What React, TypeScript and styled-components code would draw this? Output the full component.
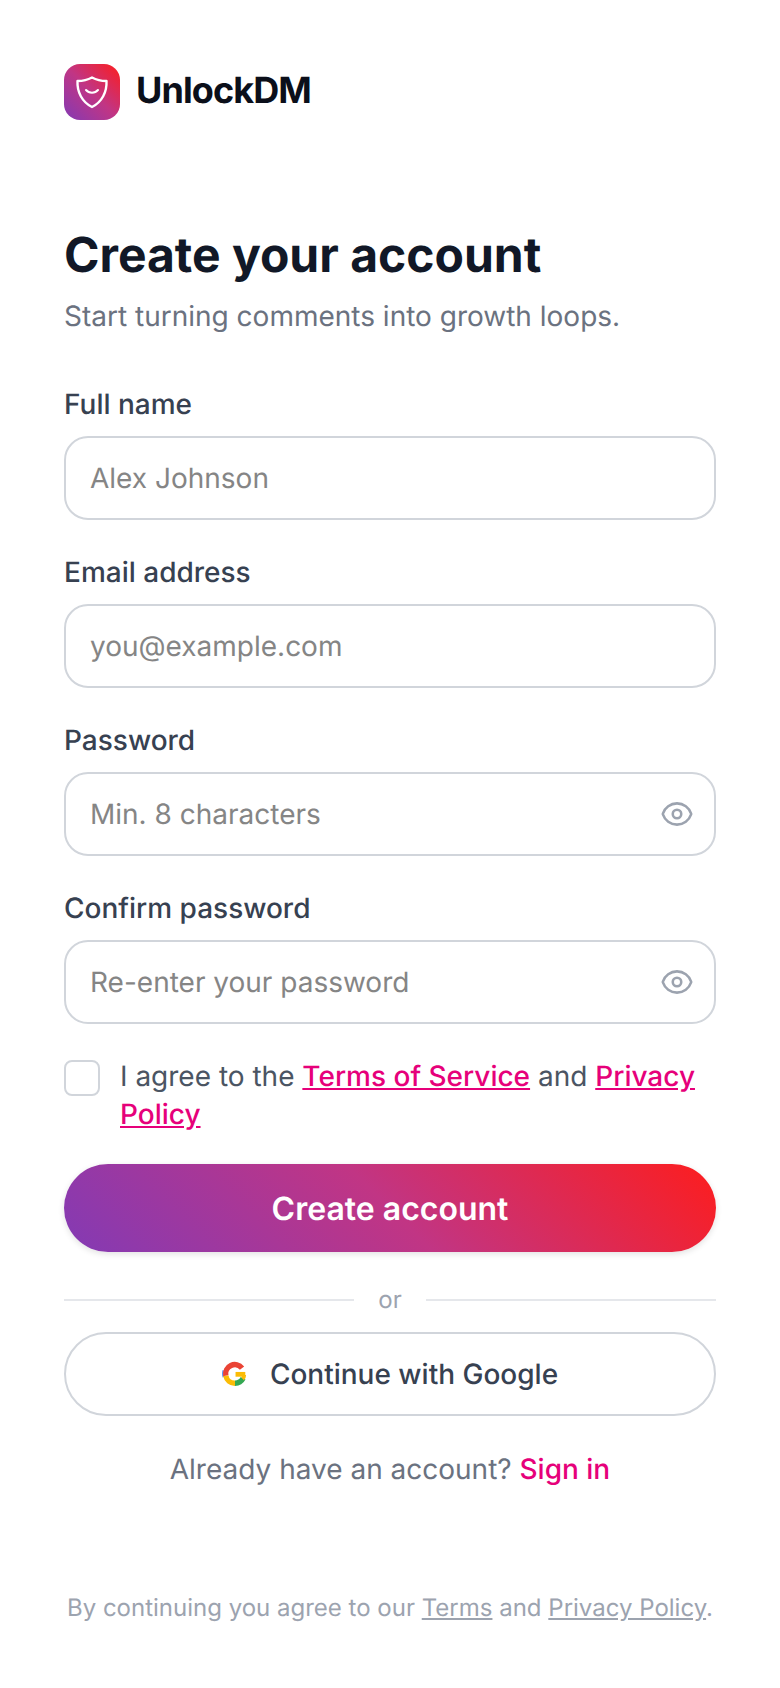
import styled, { createGlobalStyle } from "styled-components";

const GlobalStyle = createGlobalStyle`
  * { box-sizing: border-box; }
  html, body { margin: 0; padding: 0; background: #ffffff; }
  body {
    font-family: Inter, "Liberation Sans", sans-serif;
    text-rendering: geometricPrecision;
  }
`;

const Page = styled.div`
  width: 780px;
  height: 1688px;
  padding: 64px 64px 0;
  display: flex;
  flex-direction: column;
`;

const Brand = styled.div`
  display: flex;
  align-items: center;
  gap: 16px;
  height: 56px;
`;

const LogoBox = styled.div`
  width: 56px;
  height: 56px;
  border-radius: 16px;
  background: linear-gradient(45deg, #833ab4, #c13584, #fd1d1d);
  display: flex;
  align-items: center;
  justify-content: center;
`;

const BrandName = styled.span`
  font-size: 36px;
  line-height: 52px;
  margin-bottom: 4px;
  font-weight: 700;
  letter-spacing: -0.9px;
  color: #0b0f1a;
`;

const Title = styled.h1`
  margin: 105px 0 0;
  font-size: 48px;
  line-height: 60px;
  font-weight: 700;
  color: #111827;
`;

const Subtitle = styled.p`
  margin: 11px 0 0;
  font-size: 28px;
  line-height: 40px;
  color: #6b7280;
`;

const Form = styled.form`
  margin-top: 48px;
  display: flex;
  flex-direction: column;
`;

const Field = styled.div`
  display: flex;
  flex-direction: column;
  gap: 12px;
  margin-bottom: 32px;
`;

const Label = styled.label`
  font-size: 28px;
  line-height: 40px;
  font-weight: 500;
  color: #374151;
`;

const InputBox = styled.div`
  height: 84px;
  border: 2px solid #d1d5db;
  border-radius: 24px;
  padding: 0 20px 0 24px;
  display: flex;
  align-items: center;
  justify-content: space-between;
`;

const Input = styled.input`
  flex: 1;
  min-width: 0;
  border: none;
  outline: none;
  padding: 0;
  font-family: inherit;
  font-size: 28px;
  color: #111827;
  background: transparent;
  text-rendering: geometricPrecision;
  &::placeholder { color: #858585; }
`;

const EyeButton = styled.span`
  display: flex;
  color: #9ca3af;
`;

const AgreeRow = styled.div`
  display: flex;
  gap: 20px;
  margin-top: 1px;
`;

const Checkbox = styled.span`
  flex: none;
  width: 36px;
  height: 36px;
  margin-top: 3px;
  border: 2px solid #d1d5db;
  border-radius: 8px;
`;

const AgreeText = styled.span`
  font-size: 28px;
  line-height: 38px;
  color: #4b5563;
`;

const PinkLink = styled.a`
  color: #e6007a;
  font-weight: 500;
  text-decoration: underline;
`;

const PrimaryButton = styled.button`
  margin-top: 31px;
  height: 88px;
  border: none;
  border-radius: 44px;
  background: linear-gradient(45deg, #833ab4, #c13584, #fd1d1d);
  box-shadow: 0 2px 6px rgba(0, 0, 0, 0.12);
  color: #ffffff;
  font-family: inherit;
  font-size: 32px;
  font-weight: 600;
  text-rendering: geometricPrecision;
`;

const Divider = styled.div`
  margin-top: 32px;
  display: flex;
  align-items: center;
  gap: 24px;
  font-size: 24px;
  line-height: 32px;
  color: #9ca3af;
  &::before, &::after {
    content: "";
    flex: 1;
    height: 2px;
    background: #e5e7eb;
  }
`;

const GoogleButton = styled.button`
  margin-top: 16px;
  height: 84px;
  border: 2px solid #d1d5db;
  border-radius: 42px;
  background: #ffffff;
  display: flex;
  align-items: center;
  justify-content: center;
  gap: 22px;
  font-family: inherit;
  font-size: 28px;
  font-weight: 500;
  color: #374151;
  text-rendering: geometricPrecision;
`;

const SwitchLine = styled.p`
  margin: 33px 0 0;
  text-align: center;
  font-size: 28px;
  line-height: 40px;
  color: #6b7280;
`;

const SignIn = styled.a`
  color: #e6007a;
  font-weight: 500;
`;

const FinePrint = styled.p`
  margin: 103px 0 0;
  text-align: center;
  font-size: 24px;
  line-height: 32px;
  color: #9ca3af;
  white-space: nowrap;
`;

const FineLink = styled.a`
  color: #9ca3af;
  text-decoration: underline;
`;

const ShieldLogo = () => (
  <svg width="34" height="34" viewBox="0 0 34 34" fill="none" stroke="#fff" strokeLinecap="round" strokeLinejoin="round">
    <path d="M17 2.500C21.500 5 26.500 6 31.500 6C32 17 27 27 17 32C7 27 2 17 2.500 6C7.500 6 12.500 5 17 2.500Z" strokeWidth="2.400" />
    <path d="M11 15C14 18.500 20 18.500 23 15" strokeWidth="2" />
  </svg>
);

const Eye = () => (
  <svg width="34" height="34" viewBox="0 0 24 24" fill="none" stroke="currentColor" strokeWidth="1.800" strokeLinecap="round" strokeLinejoin="round">
    <path d="M2.036 12.322a1.012 1.012 0 0 1 0-.639C3.423 7.510 7.360 4.500 12 4.500c4.638 0 8.573 3.007 9.963 7.178.07.207.07.431 0 .639C20.577 16.490 16.640 19.500 12 19.500c-4.638 0-8.573-3.007-9.964-7.178z" />
    <circle cx="12" cy="12" r="3" />
  </svg>
);

const GoogleMark = () => (
  <svg width="26" height="26" viewBox="0 0 24 24" fill="none" strokeWidth="5">
    <path stroke="#4285f4" strokeWidth="1.200" d="M1.200 8.500A11 11 0 0 0 1.200 15" />
    <path stroke="#fbbc05" d="M3.500 13.500A8.500 8.500 0 0 0 12 20.500" />
    <path stroke="#34a853" d="M12 20.500A8.500 8.500 0 0 0 19.500 16" />
    <path stroke="#ea4335" d="M18.500 6.540A8.500 8.500 0 0 0 3.500 13.500" />
    <path stroke="#fbbc05" strokeWidth="4.400" d="M12.500 12.300H21.500" />
    <path stroke="#fbbc05" strokeWidth="3.500" d="M20.500 13C20.500 14 20 15.500 19 16.500" />
  </svg>
);

const fields = [
  { label: "Full name", placeholder: "Alex Johnson", secret: false },
  { label: "Email address", placeholder: "you@example.com", secret: false },
  { label: "Password", placeholder: "Min. 8 characters", secret: true },
  { label: "Confirm password", placeholder: "Re-enter your password", secret: true },
];

export default function App() {
  return (
    <Page>
      <GlobalStyle />
      <Brand>
        <LogoBox>
          <ShieldLogo />
        </LogoBox>
        <BrandName>UnlockDM</BrandName>
      </Brand>
      <Title>Create your account</Title>
      <Subtitle>Start turning comments into growth loops.</Subtitle>
      <Form>
        {fields.map((field) => (
          <Field key={field.label}>
            <Label>{field.label}</Label>
            <InputBox>
              <Input placeholder={field.placeholder} />
              {field.secret && (
                <EyeButton>
                  <Eye />
                </EyeButton>
              )}
            </InputBox>
          </Field>
        ))}
        <AgreeRow>
          <Checkbox />
          <AgreeText>
            I agree to the <PinkLink>Terms of Service</PinkLink> and <PinkLink>Privacy Policy</PinkLink>
          </AgreeText>
        </AgreeRow>
        <PrimaryButton type="button">Create account</PrimaryButton>
        <Divider>or</Divider>
        <GoogleButton type="button">
          <GoogleMark />
          Continue with Google
        </GoogleButton>
      </Form>
      <SwitchLine>
        Already have an account? <SignIn>Sign in</SignIn>
      </SwitchLine>
      <FinePrint>
        By continuing you agree to our <FineLink>Terms</FineLink> and <FineLink>Privacy Policy</FineLink>.
      </FinePrint>
    </Page>
  );
}
